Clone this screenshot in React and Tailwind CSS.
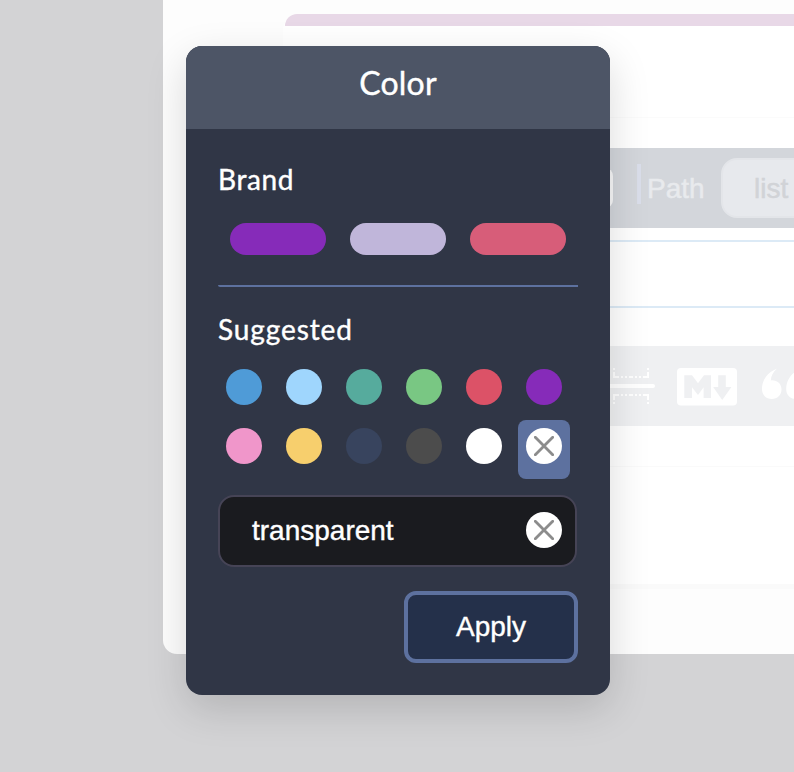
import React from "react";

const brand = ["bg-[#862bb9]", "bg-[#c0b6da]", "bg-[#d75d79]"];
const suggested = [
  "bg-[#4f9bd7]", "bg-[#9fd6fd]", "bg-[#56ab9d]", "bg-[#79c783]", "bg-[#dc5267]", "bg-[#862bb9]",
  "bg-[#f096ca]", "bg-[#f7cf6d]", "bg-[#38445e]", "bg-[#4c4c4c]", "bg-white",
];

function ClearDot() {
  return (
    <span className="flex size-9 items-center justify-center rounded-full bg-white">
      <svg viewBox="0 0 20 20" className="size-5" fill="none" stroke="#8c8c8c" strokeWidth="2.8" strokeLinecap="round">
        <path d="M1.3 1.3L18.7 18.7M18.7 1.3L1.3 18.7" />
      </svg>
    </span>
  );
}

function PageBreakIcon() {
  return (
    <svg viewBox="0 0 65 40" className="h-10 w-[65px] shrink-0" fill="white">
      <path d="M0 18h63a2 2 0 0 1 0 4H0z" />
      <path d="M23 2h2v2h-2zM23 6h2v4h4v2h-6zM57 2h2v2h-2zM57 6h2v6h-6v-2h4zM31 10h2v2h-2zM35 10h2v2h-2zM39 10h4v2h-4zM45 10h2v2h-2zM49 10h2v2h-2z" />
      <path d="M23 28h6v2h-4v4h-2zM23 36h2v2h-2zM53 28h6v6h-2v-4h-4zM57 36h2v2h-2zM31 28h2v2h-2zM35 28h2v2h-2zM39 28h4v2h-4zM45 28h2v2h-2zM49 28h2v2h-2z" />
    </svg>
  );
}

function MarkdownIcon() {
  return (
    <svg viewBox="0 0 60 38" className="h-[38px] w-[60px] shrink-0">
      <rect width="60" height="37.6" rx="4" fill="white" />
      <path fill="#eff0f2" d="M7.3 7.3h7.7l6 8 6-8h7v22.6h-7.4V19.3l-5.6 7.7-6-7.7v10.6H7.3zM41.2 7.3h7.6V19h5.6L45.2 32 36.2 19h5z" />
    </svg>
  );
}

function QuoteIcon() {
  const mark = "M15 .6C5.5 4.5 0 12 0 21C0 27 4 31 9.8 31C15.4 31 19.5 27 19.5 21.5C19.5 16 15.5 12.3 10 12.3L8.8 12.4C9 8 11 4.5 15 .6Z";
  return (
    <svg viewBox="0 0 44 32" className="h-8 w-11 shrink-0" fill="white">
      <path d={mark} />
      <path transform="translate(24.2 0)" d={mark} />
    </svg>
  );
}

function Editor() {
  return (
    <div className="ml-[163px] h-[654px] overflow-hidden rounded-bl-[14px] bg-[#fdfdfd] pt-3.5 pl-[122px]">
      <div className="-ml-0.5 h-[575px] rounded-tl-2xl border-b-[5px] border-[#fafafa] bg-white pl-0.5">
        <div className="h-3 rounded-tl-xl bg-[#e8d8e7]" />
        <div className="h-[92px] border-b border-[#fbfbfb]" />
        <div className="mt-[30px] flex h-20 items-center bg-[#d3d6db] font-['Liberation_Sans',sans-serif] text-[28px]">
          <div className="h-10 w-[328px] shrink-0 rounded-lg bg-[#f7f7f8]" />
          <div className="mb-2 ml-6 h-10 w-1 shrink-0 bg-[#dadeea]" />
          <span className="ml-1.5 w-[74px] shrink-0 pt-0.5 text-[#e8eaed] [-webkit-text-stroke:0.5px]">Path</span>
          <div className="flex h-[60px] w-[120px] shrink-0 items-center rounded-[16px] border-2 border-[#e3e5e9] bg-[#e7e9ed] pt-0.5 pl-[31px] text-[#d1d3d7] [-webkit-text-stroke:0.5px]">
            list
          </div>
        </div>
        <div className="mt-3 h-[68px] border-y-2 border-[#dceaf6]" />
        <div className="mt-[38px] flex h-20 items-center bg-[#eff0f2] pl-[305px]">
          <PageBreakIcon />
          <div className="mt-0.5 ml-[22px]"><MarkdownIcon /></div>
          <div className="mb-1 ml-[24.5px]"><QuoteIcon /></div>
        </div>
        <div className="h-[41px] border-b border-[#fafafa]" />
      </div>
    </div>
  );
}

function ColorDialog() {
  return (
    <div className="absolute top-[46px] left-[186px] h-[649px] w-[424px] overflow-hidden rounded-[16px] bg-[#303646] font-['Lato',sans-serif] text-white shadow-[0_14px_40px_rgba(0,0,0,0.15)] [-webkit-text-stroke:0.4px]">
      <header className="flex h-[83px] justify-center bg-[#4d5566] pt-[17px] text-[32px] leading-10">
        <span className="tracking-[0.2px]">Color</span>
      </header>
      <div className="px-8">
        <h2 className="pt-8 text-[28px] leading-9 tracking-[0.6px]">Brand</h2>
        <div className="mt-[26px] flex gap-6 px-3">
          {brand.map((c) => <span key={c} className={`h-8 w-24 rounded-full ${c}`} />)}
        </div>
        <div className="mt-[30px] h-0.5 rounded-bl-sm bg-[#5d719f]" />
        <h2 className="pt-6 text-[28px] leading-9 tracking-[0.9px]">Suggested</h2>
        <div className="mt-3.5 grid w-[360px] grid-cols-6">
          {suggested.map((c, i) => (
            <span key={i} className="flex h-[59px] justify-center pr-2 pt-2">
              <span className={`size-9 rounded-full ${c}`} />
            </span>
          ))}
          <span className="flex h-[59px] w-[52px] justify-center rounded-lg bg-[#5d719f] pt-2"><ClearDot /></span>
        </div>
        <div className="mt-4 flex h-[72px] w-[359px] items-center justify-between rounded-[16px] border-2 border-[#464456] bg-[#1a1b1f] pr-[13px] pb-[3px] pl-8 font-['Liberation_Sans',sans-serif] text-[28px]">
          <span className="pt-0.5">transparent</span>
          <ClearDot />
        </div>
        <button className="mt-6 ml-auto flex h-[72px] w-[174px] items-center justify-center rounded-[12px] border-4 border-[#5d719f] bg-[#24304a] font-['Liberation_Sans',sans-serif] text-[28px]">
          Apply
        </button>
      </div>
    </div>
  );
}

export default function App() {
  return (
    <div className="relative h-[772px] w-[794px] overflow-hidden bg-[#d3d3d5]">
      <Editor />
      <ColorDialog />
    </div>
  );
}
